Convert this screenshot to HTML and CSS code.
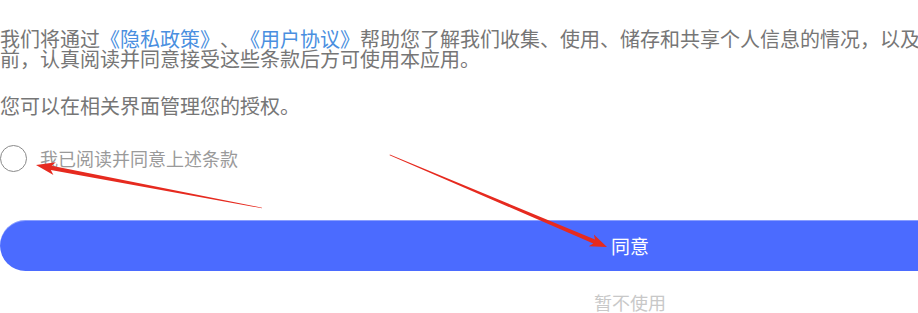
FILE: index.html
```html
<!DOCTYPE html>
<html lang="zh-CN">
<head>
<meta charset="utf-8">
<title>隐私政策</title>
<link rel="stylesheet" href="styles.css">
</head>
<body>
<div class="page">
  <div class="content">
    <p class="intro">
      <span class="line">我们将通过<a class="link">《隐私政策》</a>、<a class="link">《用户协议》</a>帮助您了解我们收集、使用、储存和共享个人信息的情况，以及您享有的相关权利。请您在使用</span>
      <span class="line">前，认真阅读并同意接受这些条款后方可使用本应用。</span>
    </p>
    <p class="intro second">您可以在相关界面管理您的授权。</p>
    <label class="agree">
      <span class="circle"></span>
      <span class="agree-text">我已阅读并同意上述条款</span>
    </label>
    <div class="btn-primary">同意</div>
    <div class="btn-secondary">暂不使用</div>
  </div>
  <svg class="annot" width="918" height="313" viewBox="0 0 918 313" xmlns="http://www.w3.org/2000/svg">
    <g transform="translate(36 165) rotate(190.77)">
      <polygon points="0,0 -19,-6.5 -15.5,-2.2 -230,-0.3 -230,0.3 -15.5,2.2 -19,6.5" fill="#e62a1f"/>
    </g>
    <g transform="translate(607 247) rotate(22.98)">
      <polygon points="0,0 -17,-6.5 -14,-2.2 -236,-0.3 -236,0.3 -14,2.2 -17,6.5" fill="#e62a1f"/>
    </g>
  </svg>
</div>
</body>
</html>
```

FILE: styles.css
```css
html, body {
  margin: 0;
  padding: 0;
  background: #ffffff;
  overflow: hidden;
}

.page {
  position: relative;
  width: 918px;
  height: 313px;
  overflow: hidden;
  font-family: "Noto Sans CJK SC", "Noto Sans", sans-serif;
  text-spacing-trim: space-all;
  font-feature-settings: normal;
}

.content {
  width: 1260px;
  padding-top: 29px;
}

.intro {
  margin: 0;
  font-size: 20px;
  line-height: 20px;
  color: #767676;
  white-space: nowrap;
}

.line {
  display: block;
}

.link {
  color: #4a8fe0;
  text-decoration: none;
}

.second {
  margin-top: 27px;
}

.agree {
  display: flex;
  align-items: center;
  gap: 13px;
  margin-top: 28px;
  height: 28px;
}

.circle {
  width: 25px;
  height: 25px;
  border: 1px solid #8a8a8a;
  border-radius: 50%;
  flex: none;
}

.agree-text {
  font-size: 18px;
  line-height: 22px;
  color: #9a9a9a;
}

.btn-primary {
  margin-top: 48px;
  height: 51px;
  border-radius: 26px;
  background: #4b6bff;
  box-shadow: inset 0 1px 0 rgba(255, 255, 255, 0.35);
  color: #ffffff;
  font-size: 19px;
  line-height: 51px;
  text-align: center;
}

.btn-secondary {
  margin-top: 20px;
  font-size: 18px;
  line-height: 22px;
  color: #c8c8c8;
  text-align: center;
}

.annot {
  position: absolute;
  left: 0;
  top: 0;
  pointer-events: none;
}
```
